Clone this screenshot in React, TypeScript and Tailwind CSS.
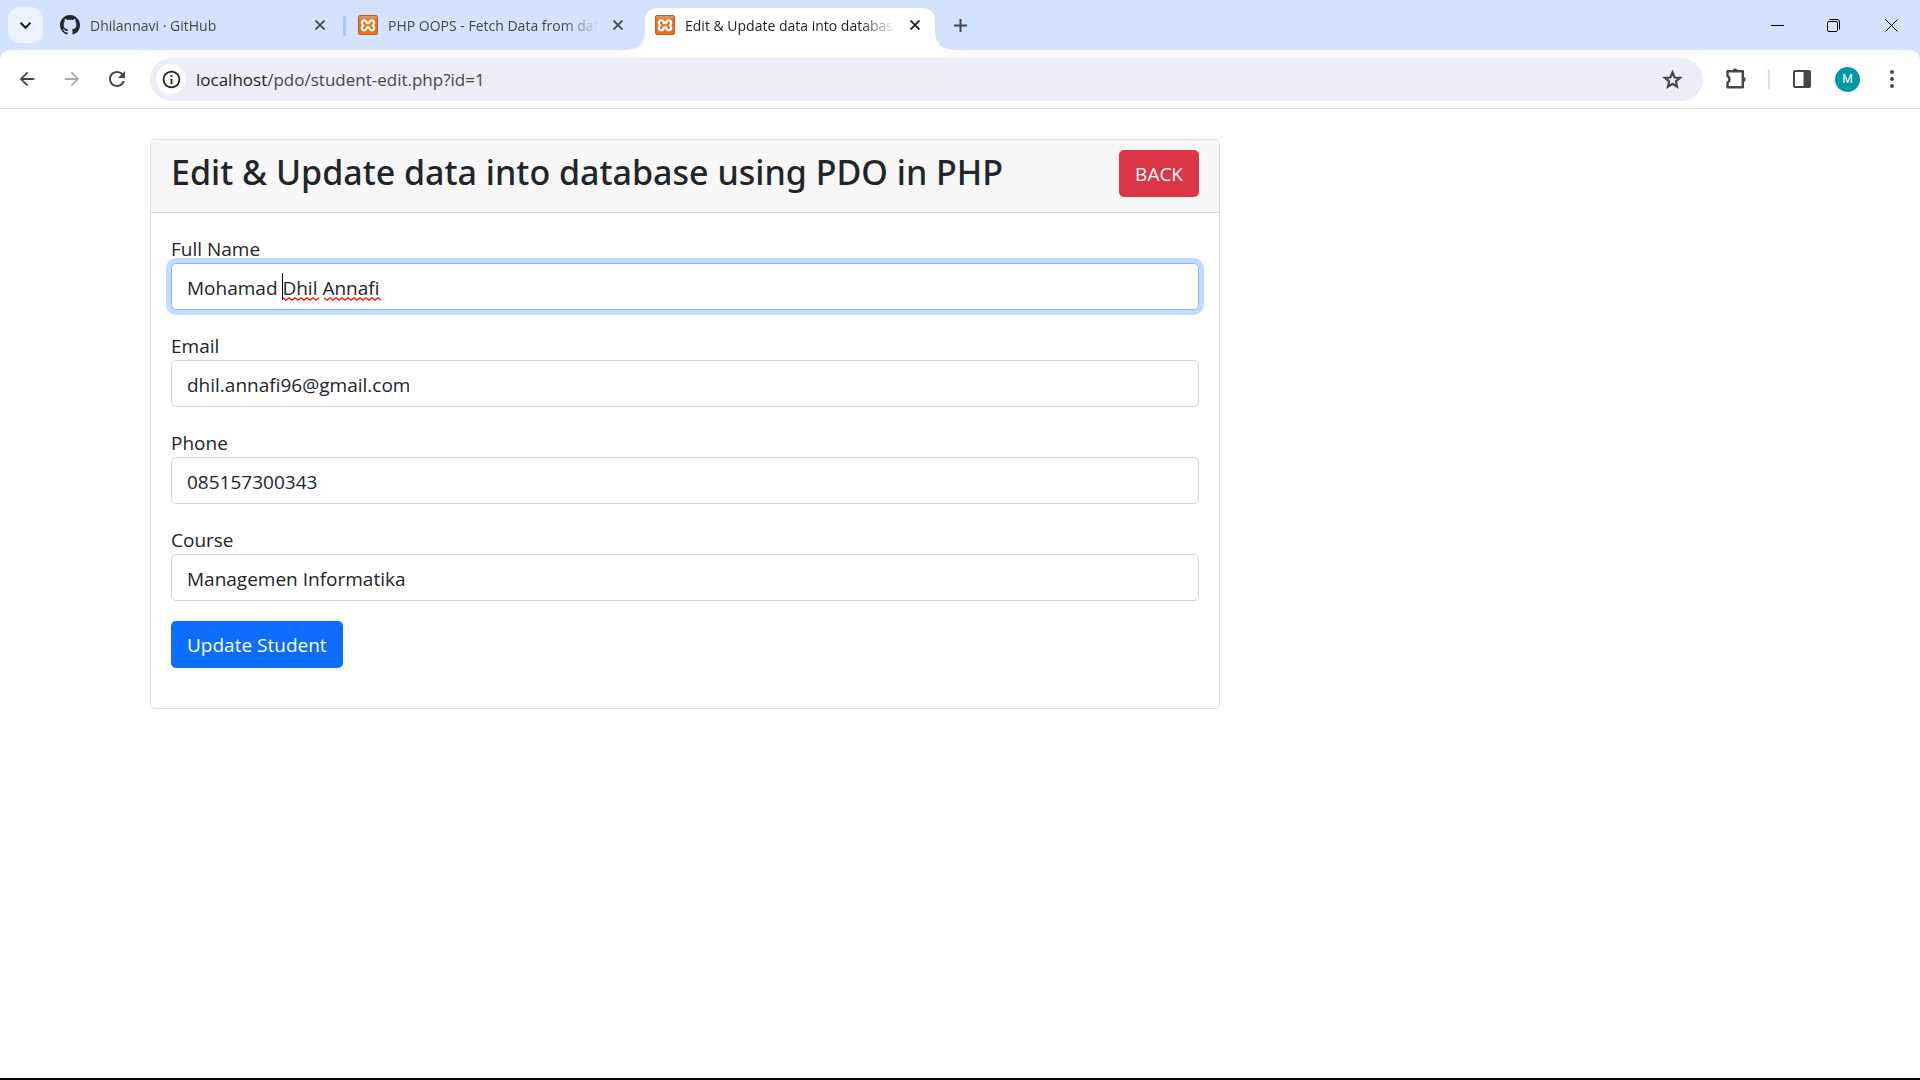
import type { ReactNode } from "react";

const MaterialIcon = ({ d, className = "" }: { d: string; className?: string }) => (
  <svg viewBox="0 0 24 24" className={className} fill="currentColor" aria-hidden="true">
    <path d={d} />
  </svg>
);

const GithubMark = () => (
  <svg viewBox="0 0 16 16" className="size-5 shrink-0 text-[#24292f]" fill="currentColor" aria-hidden="true">
    <path d="M8 0C3.58 0 0 3.58 0 8c0 3.54 2.29 6.53 5.47 7.59.4.07.55-.17.55-.38 0-.19-.01-.82-.01-1.49-2.01.37-2.53-.49-2.69-.94-.09-.23-.48-.94-.82-1.13-.28-.15-.68-.52-.01-.53.63-.01 1.08.58 1.23.82.72 1.21 1.87.87 2.33.66.07-.52.28-.87.51-1.07-1.78-.2-3.64-.89-3.64-3.95 0-.87.31-1.59.82-2.15-.08-.2-.36-1.02.08-2.12 0 0 .67-.21 2.2.82.64-.18 1.32-.27 2-.27s1.36.09 2 .27c1.53-1.04 2.2-.82 2.2-.82.44 1.1.16 1.92.08 2.12.51.56.82 1.27.82 2.15 0 3.07-1.87 3.75-3.65 3.95.29.25.54.73.54 1.48 0 1.07-.01 1.93-.01 2.2 0 .21.15.46.55.38A8.01 8.01 0 0 0 16 8c0-4.42-3.58-8-8-8z" />
  </svg>
);

const XamppMark = () => (
  <svg viewBox="0 0 20 20" className="size-5 shrink-0" aria-hidden="true">
    <rect x="0.5" y="0.5" width="19" height="19" rx="1.500" fill="#f26c1a" stroke="#b5622a" />
    <rect x="1" y="1" width="18" height="2.500" fill="#dd9560" />
    <g fill="none" stroke="#fff" strokeWidth="2.300" strokeLinejoin="round" strokeLinecap="round">
      <path d="M6.300 5.300C8 5.300 8.700 6.300 8.800 8H11.200C11.300 6.300 12 5.300 13.700 5.300C16.600 5.300 17 8.700 14.800 10.300C17 11.900 16.600 15.300 13.700 15.300C11.700 15.300 11.300 14 11.200 12.300H8.800C8.700 14 8.300 15.300 6.300 15.300C3.400 15.300 3 11.900 5.200 10.300C3 8.700 3.400 5.300 6.300 5.300Z" />
    </g>
  </svg>
);

const Cross = () => (
  <svg viewBox="0 0 10 10" className="size-[10px]" stroke="currentColor" strokeWidth="1.8" aria-hidden="true">
    <path d="M0.5 0.5L9.5 9.5M9.5 0.5L0.5 9.5" />
  </svg>
);

function Tab({ icon, title, active = false }: { icon: ReactNode; title: string; active?: boolean }) {
  return (
    <div
      className={
        active
          ? "relative flex h-[42px] w-[290px] items-center rounded-t-[12px] bg-white px-[10px] pb-2 text-[#1f1f1f]"
          : "flex h-[42px] w-[290px] items-center px-[10px] pb-2 text-[#474747]"
      }
    >
      {active && (
        <>
          <span className="absolute bottom-0 -left-4 size-4 bg-[radial-gradient(circle_at_0_0,transparent_15px,white_16px)]" />
          <span className="absolute -right-4 bottom-0 size-4 bg-[radial-gradient(circle_at_100%_0,transparent_15px,white_16px)]" />
        </>
      )}
      {icon}
      <span className="ml-[10px] flex-1 overflow-hidden pt-px text-sm whitespace-nowrap [mask-image:linear-gradient(to_right,black_175px,transparent_211px)]">
        {title}
      </span>
      <button type="button" aria-label="Close tab" className="ml-[9px] flex size-5 shrink-0 items-center justify-center">
        <Cross />
      </button>
    </div>
  );
}

function TabStrip() {
  return (
    <div className="flex h-[50px] items-end bg-[#d3e3fd]">
      <button
        type="button"
        aria-label="Search tabs"
        className="mb-[7px] ml-2 flex h-9 w-[35px] items-center justify-center rounded-[12px] bg-[#ecf3fe] text-[#1f1f1f]"
      >
        <svg viewBox="0 0 10 6" className="h-[7px] w-[11px]" fill="none" stroke="currentColor" strokeWidth="1.9" aria-hidden="true">
          <path d="M0.5 0.5L5 5L9.5 0.5" />
        </svg>
      </button>
      <div className="ml-[7px] flex items-end">
        <Tab icon={<GithubMark />} title="Dhilannavi · GitHub" />
        <span className="mr-[2px] mb-[14px] ml-[3px] h-5 w-[3px] rounded-full bg-[#a8c7fa]" />
        <Tab icon={<XamppMark />} title="PHP OOPS - Fetch Data from data" />
        <span className="w-[7px]" />
        <Tab icon={<XamppMark />} title="Edit & Update data into database" active />
      </div>
      <button type="button" aria-label="New tab" className="mb-[15px] ml-[15px] flex size-5 items-center justify-center text-[#474747]">
        <svg viewBox="0 0 13 13" className="size-[13px]" stroke="currentColor" strokeWidth="2" aria-hidden="true">
          <path d="M6.5 0V13M0 6.5H13" />
        </svg>
      </button>
      <div className="mb-[15px] ml-auto flex h-5 items-center gap-[43px] pr-[22px] text-black">
        <button type="button" aria-label="Minimize">
          <svg viewBox="0 0 13 13" className="size-[13px]" stroke="currentColor" aria-hidden="true">
            <path d="M0 6.5H13" />
          </svg>
        </button>
        <button type="button" aria-label="Restore">
          <svg viewBox="0 0 13 13" className="size-[13px]" fill="none" stroke="currentColor" aria-hidden="true">
            <rect x="0.5" y="2.5" width="10" height="10" rx="1.5" />
            <path d="M2.5 0.5H10A2.5 2.5 0 0 1 12.5 3V10.500" />
          </svg>
        </button>
        <button type="button" aria-label="Close window" className="ml-[2px]">
          <svg viewBox="0 0 13 13" className="size-[13px]" stroke="currentColor" aria-hidden="true">
            <path d="M0.500 0.500L12.500 12.500M12.500 0.500L0.500 12.500" />
          </svg>
        </button>
      </div>
    </div>
  );
}

function Toolbar() {
  return (
    <div className="bg-[#d3e3fd]">
      <div className="flex h-[59px] items-center rounded-t-[10px] border-b border-[#e1e3e1] bg-white pl-4 text-[#474747]">
        <button type="button" aria-label="Back">
          <MaterialIcon className="size-[22px]" d="M20 11H7.830l5.590-5.590L12 4l-8 8 8 8 1.410-1.410L7.830 13H20v-2z" />
        </button>
        <button type="button" aria-label="Forward" className="ml-[23px] text-[#ababab]">
          <MaterialIcon className="size-[22px]" d="M12 4l-1.410 1.410L16.170 11H4v2h12.170l-5.580 5.590L12 20l8-8z" />
        </button>
        <button type="button" aria-label="Reload" className="ml-[22px]">
          <MaterialIcon
            className="size-6"
            d="M17.650 6.350C16.200 4.900 14.210 4 12 4c-4.420 0-7.990 3.580-7.990 8s3.570 8 7.990 8c3.730 0 6.840-2.550 7.730-6h-2.080c-.820 2.330-3.040 4-5.650 4-3.310 0-6-2.690-6-6s2.690-6 6-6c1.660 0 3.140.690 4.220 1.780L13 11h7V4l-2.350 2.350z"
          />
        </button>
        <div className="ml-[21px] flex h-[43px] flex-1 items-center rounded-full bg-[#ebeef7] pr-[19px] pl-[6px]">
          <button type="button" aria-label="View site information" className="flex size-[30px] items-center justify-center rounded-full bg-white text-[#1f1f1f]">
            <MaterialIcon
              className="size-[21px]"
              d="M11 7h2v2h-2zm0 4h2v6h-2zm1-9C6.480 2 2 6.480 2 12s4.480 10 10 10 10-4.480 10-10S17.520 2 12 2zm0 18c-4.410 0-8-3.590-8-8s3.590-8 8-8 8 3.590 8 8-3.590 8-8 8z"
            />
          </button>
          <div className="ml-[10px] flex-1 pt-px text-[17px] text-[#474747]">
            <span className="text-[#1f1f1f]">localhost</span>/pdo/student-edit.php?id=1
          </div>
          <button type="button" aria-label="Bookmark this tab">
            <svg viewBox="0 0 24 24" className="size-[23px]" fill="none" stroke="currentColor" strokeWidth="2.300" aria-hidden="true">
              <path d="M12 4.600L14.200 9.900L19.800 10.300L15.500 14L16.800 19.400L12 16.500L7.200 19.400L8.500 14L4.200 10.300L9.800 9.900Z" />
            </svg>
          </button>
        </div>
        <button type="button" aria-label="Extensions" className="ml-[22px]">
          <svg viewBox="0 0 22 22" className="size-[22px]" aria-hidden="true">
            <path
              d="M2.500 3.200H17.800V19.300H2.500V14.800Q6.500 11.200 2.500 7.700Z"
              fill="none"
              stroke="currentColor"
              strokeWidth="2.500"
              strokeLinejoin="round"
            />
            <path d="M7.500 3A2.600 2.600 0 0 1 12.700 3ZM18 8.700A2.600 2.600 0 0 1 18 13.900Z" fill="currentColor" />
          </svg>
        </button>
        <span className="ml-[21px] h-5 w-[2px] bg-[#d3e3fd]" />
        <button type="button" aria-label="Side panel" className="ml-[23px]">
          <svg viewBox="0 0 18 18" className="size-[18px]" aria-hidden="true">
            <rect x="1" y="1" width="16" height="16" rx="1" fill="none" stroke="currentColor" strokeWidth="2" />
            <rect x="10.500" y="1" width="6.500" height="16" fill="currentColor" />
          </svg>
        </button>
        <button
          type="button"
          aria-label="Profile"
          className="ml-6 flex size-[25px] items-center justify-center rounded-full bg-[#0097a7] font-['Roboto',sans-serif] text-xs text-white"
        >
          M
        </button>
        <button type="button" aria-label="Menu" className="mr-[17px] ml-[21px]">
          <svg viewBox="0 0 22 22" className="size-[22px]" fill="currentColor" aria-hidden="true">
            <circle cx="11" cy="4" r="2" />
            <circle cx="11" cy="11" r="2" />
            <circle cx="11" cy="18" r="2" />
          </svg>
        </button>
      </div>
    </div>
  );
}

const Squiggle = ({ id, className }: { id: string; className: string }) => (
  <svg className={className} aria-hidden="true">
    <defs>
      <pattern id={id} width="6" height="4" patternUnits="userSpaceOnUse">
        <path d="M-1 0L0 0.800L3 3.200L6 0.800L7 0" fill="none" stroke="#ff0000" strokeWidth="1.200" />
      </pattern>
    </defs>
    <rect width="100%" height="4" fill={`url(#${id})`} />
  </svg>
);

const fields = [
  { id: "fullname", label: "Full Name", value: "Mohamad Dhil Annafi", type: "text", focused: true },
  { id: "email", label: "Email", value: "dhil.annafi96@gmail.com", type: "email", focused: false },
  { id: "phone", label: "Phone", value: "085157300343", type: "text", focused: false },
  { id: "course", label: "Course", value: "Managemen Informatika", type: "text", focused: false },
];

function StudentForm() {
  return (
    <form className="p-5" onSubmit={(e) => e.preventDefault()}>
      {fields.map((f) => (
        <div key={f.id} className="mb-5">
          <label htmlFor={f.id} className="block pt-[2px] leading-[28px]">
            {f.label}
          </label>
          <div className="relative">
            <input
              id={f.id}
              type={f.type}
              defaultValue={f.value}
              spellCheck={false}
              className={
                f.focused
                  ? "block h-[47px] w-full rounded-[5px] border border-[#86b7fe] bg-white px-[15px] pt-[2px] shadow-[0_0_0_5px_#c2dbff] outline-none"
                  : "block h-[47px] w-full rounded-[5px] border border-[#ced4da] bg-white px-[15px] pt-[2px] outline-none"
              }
            />
            {f.focused && (
              <>
                <span className="absolute top-[10px] left-[111px] h-[27px] w-px bg-black" />
                <Squiggle id="wave-a" className="absolute top-[34px] left-[112px] h-1 w-[36px]" />
                <Squiggle id="wave-b" className="absolute top-[34px] left-[153px] h-1 w-[57px]" />
              </>
            )}
          </div>
        </div>
      ))}
      <button type="submit" className="mb-5 block h-[47px] rounded-[5px] bg-[#0d6efd] px-4 pt-[2px] text-white">
        Update Student
      </button>
    </form>
  );
}

export default function App() {
  return (
    <div className="flex min-h-screen flex-col bg-white font-['Open_Sans','Noto_Sans',sans-serif]">
      <header>
        <TabStrip />
        <Toolbar />
      </header>
      <main className="mx-auto w-full max-w-[1650px] flex-1 px-[15px] pt-[30px] text-[19px] text-[#212529]">
        <div className="w-[66%] min-w-[1070px] rounded-[5px] border border-[#dfdfdf]">
          <div className="flex items-start justify-between rounded-t-[4px] border-b border-[#d9d9d9] bg-[#f7f7f7] px-5 py-[10px]">
            <h1 className="mb-[10px] pt-[2px] font-['Noto_Sans',sans-serif] text-[34px] leading-[40px] font-medium">
              Edit &amp; Update data into database using PDO in PHP
            </h1>
            <a href="index.php" className="flex h-[47px] items-center rounded-[5px] bg-[#dc3545] px-4 pt-[2px] text-white">
              BACK
            </a>
          </div>
          <StudentForm />
        </div>
      </main>
      <div className="h-[2px] bg-black" />
    </div>
  );
}
